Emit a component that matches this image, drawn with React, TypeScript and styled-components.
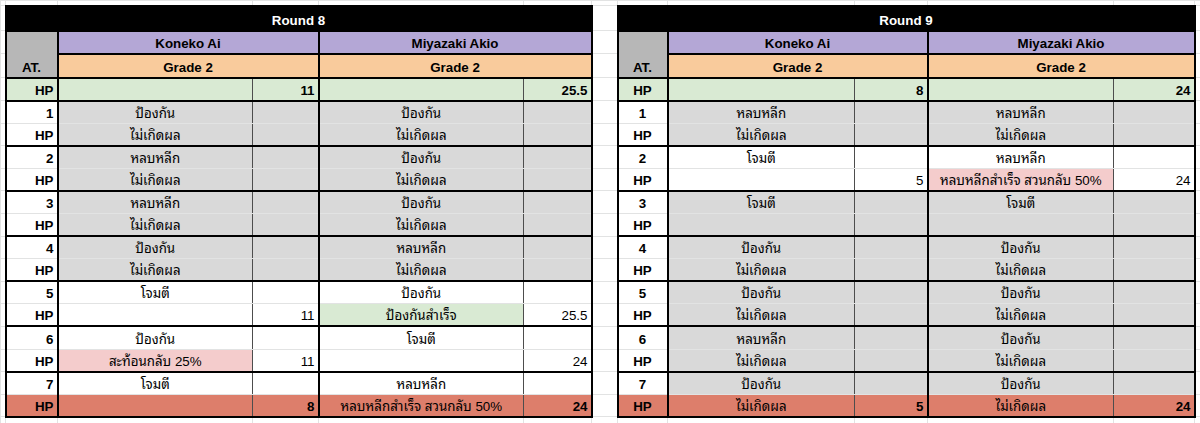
import React from "react";
import styled, { createGlobalStyle } from "styled-components";

type Edge = "k" | "t" | "g";
type Fill = "white" | "gray" | "black" | "atGray" | "purple" | "orange" | "green" | "pink" | "red";
type Align = "left" | "center" | "right";

const FILLS: Record<Fill, string> = {
  white: "#ffffff",
  gray: "#d9d9d9",
  black: "#000000",
  atGray: "#b7b7b7",
  purple: "#b4a7d6",
  orange: "#f9cb9c",
  green: "#d9ead3",
  pink: "#f4cccc",
  red: "#dd7e6b",
};

const EDGES: Record<Edge, string> = {
  k: "2px solid #000",
  t: "1px solid #4d4d4d",
  g: "1px solid #e2e3e3",
};

interface Turn {
  act: string;
  res?: string;
  hp?: string;
  fill: "gray" | "white";
  resFill?: Fill;
}

interface Player {
  name: string;
  grade: string;
  start: string;
  turns: Turn[];
  last: { res?: string; hp: string };
}

interface Round {
  title: string;
  centered: boolean;
  players: [Player, Player];
}

const NONE = "ไม่เกิดผล";
const G = (act: string, res?: string): Turn => ({ act, res, fill: "gray" });

const ROUNDS: Round[] = [
  {
    title: "Round 8",
    centered: false,
    players: [
      {
        name: "Koneko Ai",
        grade: "Grade 2",
        start: "11",
        turns: [
          G("ป้องกัน", NONE),
          G("หลบหลีก", NONE),
          G("หลบหลีก", NONE),
          G("ป้องกัน", NONE),
          { act: "โจมตี", hp: "11", fill: "white" },
          { act: "ป้องกัน", res: "สะท้อนกลับ 25%", resFill: "pink", hp: "11", fill: "white" },
          { act: "โจมตี", fill: "white" },
        ],
        last: { hp: "8" },
      },
      {
        name: "Miyazaki Akio",
        grade: "Grade 2",
        start: "25.5",
        turns: [
          G("ป้องกัน", NONE),
          G("ป้องกัน", NONE),
          G("ป้องกัน", NONE),
          G("หลบหลีก", NONE),
          { act: "ป้องกัน", res: "ป้องกันสำเร็จ", resFill: "green", hp: "25.5", fill: "white" },
          { act: "โจมตี", hp: "24", fill: "white" },
          { act: "หลบหลีก", fill: "white" },
        ],
        last: { res: "หลบหลีกสำเร็จ สวนกลับ 50%", hp: "24" },
      },
    ],
  },
  {
    title: "Round 9",
    centered: true,
    players: [
      {
        name: "Koneko Ai",
        grade: "Grade 2",
        start: "8",
        turns: [
          G("หลบหลีก", NONE),
          { act: "โจมตี", hp: "5", fill: "white" },
          G("โจมตี"),
          G("ป้องกัน", NONE),
          G("ป้องกัน", NONE),
          G("หลบหลีก", NONE),
          G("ป้องกัน"),
        ],
        last: { res: NONE, hp: "5" },
      },
      {
        name: "Miyazaki Akio",
        grade: "Grade 2",
        start: "24",
        turns: [
          G("หลบหลีก", NONE),
          { act: "หลบหลีก", res: "หลบหลีกสำเร็จ สวนกลับ 50%", resFill: "pink", hp: "24", fill: "white" },
          G("โจมตี"),
          G("ป้องกัน", NONE),
          G("ป้องกัน", NONE),
          G("ป้องกัน", NONE),
          G("ป้องกัน"),
        ],
        last: { res: NONE, hp: "24" },
      },
    ],
  },
];

// spreadsheet column widths, left edge → right edge
const COLS = [5, 52, 195, 66, 205, 68, 26, 50, 187, 73, 186, 81, 6];

const GlobalStyle = createGlobalStyle`
  html, body {
    margin: 0;
    padding: 0;
    background: #fff;
    overflow: hidden;
  }
  body {
    font-family: "Liberation Sans", "Noto Sans Thai Looped", "Noto Sans Thai", sans-serif;
  }
`;

const Sheet = styled.table`
  width: 1200px;
  table-layout: fixed;
  border-collapse: collapse;
  font-family: "Liberation Sans", "Noto Sans Thai Looped", "Noto Sans Thai", sans-serif;
  font-size: 10pt;
  line-height: 16px;
  color: #000;
`;

const Row = styled.tr<{ $h: number }>`
  height: ${({ $h }) => $h}px;
`;

const Cell = styled.td<{
  $fill?: Fill;
  $align?: Align;
  $bold?: boolean;
  $b?: [Edge, Edge, Edge, Edge];
}>`
  padding: 0 3px 1px;
  vertical-align: bottom;
  white-space: nowrap;
  overflow: hidden;
  background: ${({ $fill }) => FILLS[$fill ?? "white"]};
  color: ${({ $fill }) => ($fill === "black" ? "#fff" : "#000")};
  text-align: ${({ $align }) => $align ?? "left"};
  font-weight: ${({ $bold }) => ($bold ? 700 : 400)};
  border-top: ${({ $b }) => EDGES[$b?.[0] ?? "g"]};
  border-right: ${({ $b }) => EDGES[$b?.[1] ?? "g"]};
  border-bottom: ${({ $b }) => EDGES[$b?.[2] ?? "g"]};
  border-left: ${({ $b }) => EDGES[$b?.[3] ?? "g"]};
`;

const BOX: [Edge, Edge, Edge, Edge] = ["k", "k", "k", "k"];

type RowKind =
  | { kind: "blank" }
  | { kind: "title" }
  | { kind: "names" }
  | { kind: "grade" }
  | { kind: "hp" }
  | { kind: "turn"; i: number; top: boolean };

function roundCells(r: Round, row: RowKind, key: string) {
  const labelAlign: Align = r.centered ? "center" : "right";

  switch (row.kind) {
    case "blank":
      return [0, 1, 2, 3, 4].map((n) => <Cell key={key + n} />);
    case "title":
      return [
        <Cell key={key} colSpan={5} $fill="black" $align="center" $bold $b={BOX}>
          {r.title}
        </Cell>,
      ];
    case "names":
      return [
        <Cell key={key + "at"} rowSpan={2} $fill="atGray" $align="center" $bold $b={BOX}>
          AT.
        </Cell>,
        ...r.players.map((p, n) => (
          <Cell key={key + n} colSpan={2} $fill="purple" $align="center" $bold $b={BOX}>
            {p.name}
          </Cell>
        )),
      ];
    case "grade":
      return r.players.map((p, n) => (
        <Cell key={key + n} colSpan={2} $fill="orange" $align="center" $bold $b={BOX}>
          {p.grade}
        </Cell>
      ));
    case "hp":
      return [
        <Cell key={key + "at"} $fill="green" $align={labelAlign} $bold $b={BOX}>
          HP
        </Cell>,
        ...r.players.flatMap((p, n) => [
          <Cell key={key + n + "a"} $fill="green" $b={["k", "t", "k", "k"]} />,
          <Cell key={key + n + "v"} $fill="green" $align="right" $bold $b={["k", "k", "k", "t"]}>
            {p.start}
          </Cell>,
        ]),
      ];
    case "turn": {
      const { i, top } = row;
      const final = !top && i === 6;
      const tb: [Edge, Edge] = top ? ["k", "g"] : ["g", "k"];
      return [
        <Cell
          key={key + "at"}
          $fill={final ? "red" : "white"}
          $align={labelAlign}
          $bold
          $b={[tb[0], "k", tb[1], "k"]}
        >
          {top ? String(i + 1) : "HP"}
        </Cell>,
        ...r.players.flatMap((p, n) => {
          const t = p.turns[i];
          let actFill: Fill = t.fill;
          let valFill: Fill = t.fill;
          let text: string | undefined = t.act;
          let value: string | undefined;
          if (final) {
            actFill = valFill = "red";
            text = p.last.res;
            value = p.last.hp;
          } else if (!top) {
            actFill = t.resFill ?? t.fill;
            text = t.res;
            value = t.hp;
          }
          return [
            <Cell key={key + n + "a"} $fill={actFill} $align="center" $b={[tb[0], "t", tb[1], "k"]}>
              {text}
            </Cell>,
            <Cell key={key + n + "v"} $fill={valFill} $align="right" $bold={final} $b={[tb[0], "k", tb[1], "t"]}>
              {value}
            </Cell>,
          ];
        }),
      ];
    }
  }
}

const ROWS: { row: RowKind; h: number }[] = [
  { row: { kind: "blank" }, h: 5 },
  { row: { kind: "title" }, h: 25 },
  { row: { kind: "names" }, h: 23 },
  { row: { kind: "grade" }, h: 24 },
  { row: { kind: "hp" }, h: 23 },
  ...Array.from({ length: 14 }, (_, n) => ({
    row: { kind: "turn", i: Math.floor(n / 2), top: n % 2 === 0 } as RowKind,
    h: 22.6,
  })),
  { row: { kind: "blank" }, h: 7 },
];

export default function App() {
  return (
    <>
      <GlobalStyle />
      <Sheet>
        <colgroup>
          {COLS.map((w, n) => (
            <col key={n} style={{ width: w }} />
          ))}
        </colgroup>
        <tbody>
          {ROWS.map(({ row, h }, n) => (
            <Row key={n} $h={h}>
              <Cell />
              {roundCells(ROUNDS[0], row, `a${n}-`)}
              <Cell />
              {roundCells(ROUNDS[1], row, `b${n}-`)}
              <Cell />
            </Row>
          ))}
        </tbody>
      </Sheet>
    </>
  );
}
